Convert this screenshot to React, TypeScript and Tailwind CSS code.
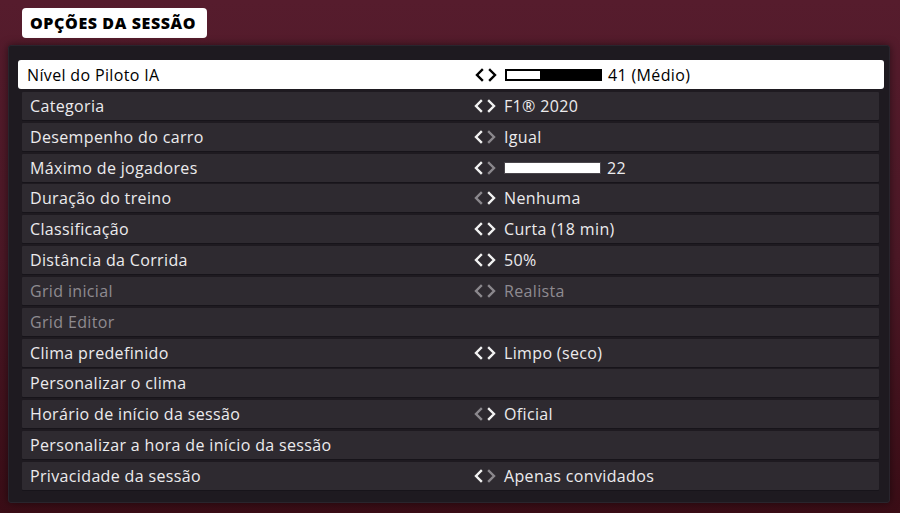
import React from "react";

type Arrow = "on" | "off";

type Option = {
  label: string;
  value?: string;
  left?: Arrow;
  right?: Arrow;
  bar?: number;
  disabled?: boolean;
  selected?: boolean;
};

const options: Option[] = [
  { label: "Nível do Piloto IA", value: "41 (Médio)", left: "on", right: "on", bar: 36, selected: true },
  { label: "Categoria", value: "F1® 2020", left: "on", right: "on" },
  { label: "Desempenho do carro", value: "Igual", left: "on", right: "off" },
  { label: "Máximo de jogadores", value: "22", left: "on", right: "off", bar: 100 },
  { label: "Duração do treino", value: "Nenhuma", left: "off", right: "on" },
  { label: "Classificação", value: "Curta (18 min)", left: "on", right: "on" },
  { label: "Distância da Corrida", value: "50%", left: "on", right: "on" },
  { label: "Grid inicial", value: "Realista", left: "off", right: "off", disabled: true },
  { label: "Grid Editor", disabled: true },
  { label: "Clima predefinido", value: "Limpo (seco)", left: "on", right: "on" },
  { label: "Personalizar o clima" },
  { label: "Horário de início da sessão", value: "Oficial", left: "off", right: "on" },
  { label: "Personalizar a hora de início da sessão" },
  { label: "Privacidade da sessão", value: "Apenas convidados", left: "on", right: "off" },
];

function Chevron({ dir, color }: { dir: "left" | "right"; color: string }) {
  return (
    <svg width="10" height="14" viewBox="0 0 10 14" fill="none" stroke={color} strokeWidth="2.4" strokeLinecap="square">
      {dir === "left" ? <polyline points="8,2 3,7 8,12" /> : <polyline points="2,2 7,7 2,12" />}
    </svg>
  );
}

function Row({ opt }: { opt: Option }) {
  const sel = !!opt.selected;
  const onColor = sel ? "#000000" : "#f2f2f2";
  const offColor = sel ? "#000000" : "#8b888d";
  const textColor = sel ? "text-black" : opt.disabled ? "text-[#8e8b90]" : "text-[#ecebed]";

  return (
    <div
      className={`flex items-center shrink-0 text-[16px] tracking-[0.35px] ${
        sel
          ? "h-[29px] ml-[9px] mr-[5px] pl-[9px] bg-white rounded-[3px]"
          : "h-[28px] ml-[13px] mr-[10px] pl-[8px] bg-[#2e2a30] rounded-[1px] shadow-[0_1px_0_#17141a]"
      }`}
    >
      <div className={`${sel ? "w-[447px]" : "w-[443px]"} ${textColor}`}>{opt.label}</div>
      {opt.value && (
        <div className={`flex items-center ${textColor}`}>
          <div className="flex items-center gap-[4px] mr-[7px]">
            <Chevron dir="left" color={opt.left === "on" ? onColor : offColor} />
            <Chevron dir="right" color={opt.right === "on" ? onColor : offColor} />
          </div>
          {opt.bar !== undefined && (
            <div
              className={`w-[97px] h-[12px] mr-[6px] ${
                sel ? "border-[2px] border-black bg-black" : "border-[1.5px] border-[#4a464c] bg-white"
              }`}
            >
              <div className="h-full bg-white" style={{ width: `${opt.bar}%` }} />
            </div>
          )}
          <span>{opt.value}</span>
        </div>
      )}
    </div>
  );
}

export default function App() {
  return (
    <div
      className="w-[900px] h-[513px] overflow-hidden flex flex-col bg-gradient-to-b from-[#561c2d] via-[#4c1826] to-[#3a0d16]"
      style={{ fontFamily: '"Open Sans", "Liberation Sans", sans-serif' }}
    >
      <div className="mt-[8px] ml-[22px] w-[185px] h-[30px] bg-white rounded-[4px] flex items-center pl-[8px]">
        <span className="text-[16px] font-extrabold text-black tracking-[0.6px]">OPÇÕES DA SESSÃO</span>
      </div>
      <div className="mt-[7px] ml-[8px] w-[882px] h-[458px] bg-[#1e1a20] rounded-[3px] border border-[#29252d] shadow-[0_0_8px_rgba(0,0,0,0.5)] pt-[14px] flex flex-col gap-[2.85px]">
        {options.map((o) => (
          <Row key={o.label} opt={o} />
        ))}
      </div>
    </div>
  );
}
